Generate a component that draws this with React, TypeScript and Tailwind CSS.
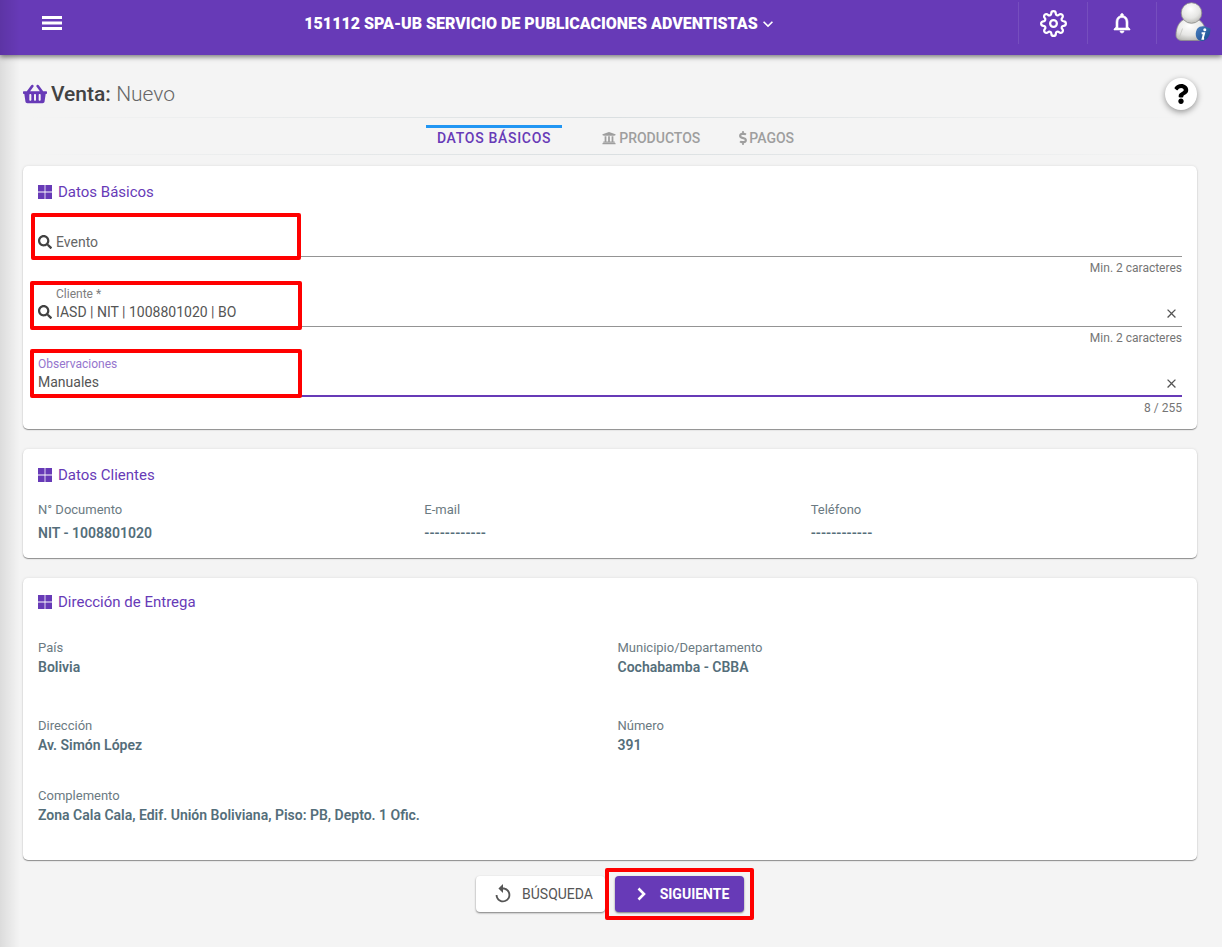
import { useState } from "react";
import type { ReactNode } from "react";
import { FaDollarSign, FaQuestion, FaSearch, FaShoppingBasket, FaUniversity } from "react-icons/fa";
import { FiSettings } from "react-icons/fi";
import { MdClose, MdExpandMore, MdNotificationsNone, MdReplay } from "react-icons/md";

function MenuIcon() {
  return (
    <svg viewBox="0 0 20 14" className="h-[14px] w-5" fill="currentColor" aria-hidden="true">
      <rect x="0" y="0" width="20" height="3" />
      <rect x="0" y="5.5" width="20" height="3" />
      <rect x="0" y="11" width="20" height="3" />
    </svg>
  );
}

function WindowsIcon() {
  return (
    <svg viewBox="0 0 14 14" className="size-[14px]" fill="currentColor" aria-hidden="true">
      <path d="M0 0h6.6v6.6H0zM7.4 0H14v6.6H7.4zM0 7.4h6.6V14H0zM7.4 7.4H14V14H7.4z" />
    </svg>
  );
}

function ChevronIcon() {
  return (
    <svg viewBox="0 0 22 22" className="size-[22px]" fill="none" stroke="currentColor" strokeWidth="2.6" aria-hidden="true">
      <path d="M8.500 5.500 14 11l-5.500 5.500" />
    </svg>
  );
}

function Avatar() {
  return (
    <svg viewBox="0 0 36 40" className="h-10 w-9" aria-hidden="true">
      <defs>
        <radialGradient id="head" cx="0.45" cy="0.3" r="0.75">
          <stop offset="0" stopColor="#ffffff" />
          <stop offset="0.6" stopColor="#e6e6e4" />
          <stop offset="1" stopColor="#b4b4b0" />
        </radialGradient>
        <linearGradient id="badge" x1="0" y1="0" x2="1" y2="1">
          <stop offset="0" stopColor="#4a7fc0" />
          <stop offset="1" stopColor="#174a8c" />
        </linearGradient>
      </defs>
      <path
        d="M9 17.500C4 19.500 1 26 1 33c0 4 3 5.500 6 5.500h18c4 0 6-2 6-5.500 0-7-3-13.500-8-15.500z"
        fill="url(#head)"
        stroke="#8f8f8c"
        strokeWidth="0.8"
      />
      <path d="M7.500 26.500 4.500 35" stroke="#c4c4c0" strokeWidth="0.8" fill="none" />
      <circle cx="16.500" cy="11" r="10.300" fill="url(#head)" stroke="#8f8f8c" strokeWidth="0.8" />
      <path
        d="M22 27c2-2.500 5-3 8-2.500l5.500 2c0 6.500-3 12-8 12.500-6 .3-8.500-6-5.500-12z"
        fill="url(#badge)"
      />
      <circle cx="29.800" cy="27.800" r="1.500" fill="#fff" />
      <path d="M26.600 31.200h2.500l-1.500 5.500h1.500" stroke="#fff" strokeWidth="2" fill="none" />
    </svg>
  );
}

function Highlight({ className }: { className: string }) {
  return (
    <span
      aria-hidden="true"
      className={`pointer-events-none absolute z-10 rounded-[2px] border-4 border-[#ff0000] ${className}`}
    />
  );
}

function Card({ title, className = "", children }: { title: string; className?: string; children: ReactNode }) {
  return (
    <section
      className={`rounded-[5px] bg-white pl-[15px] shadow-[0_1px_1px_rgba(0,0,0,0.4),0_0_3px_rgba(0,0,0,0.1)] ${className}`}
    >
      <h2 className="flex h-6 items-center gap-[6px] text-[15px] text-[#673ab7]">
        <WindowsIcon />
        {title}
      </h2>
      {children}
    </section>
  );
}

type FieldProps = {
  id: string;
  label: string;
  value: string;
  onChange: (v: string) => void;
  hint: string;
  search?: boolean;
  active?: boolean;
  highlight: string;
};

function Field({ id, label, value, onChange, hint, search, active, highlight }: FieldProps) {
  const resting = value === "" && !active;
  return (
    <div className="relative">
      <div
        className={`relative flex h-[50px] flex-col justify-end ${
          active ? "border-b-2 border-[#673ab7] pb-[3px]" : "border-b border-[#949494] pb-1"
        }`}
      >
        <label
          htmlFor={id}
          className={
            resting
              ? "absolute bottom-1 left-0 pl-[18px] text-sm leading-5 text-[#666]"
              : `h-4 text-xs leading-4 ${search ? "pl-[18px]" : ""} ${active ? "text-[#9575cd]" : "text-[#7d7d7d]"}`
          }
        >
          {label}
        </label>
        <div className="flex h-5 items-center gap-1 text-[#424242]">
          {search && <FaSearch className="size-[14px] shrink-0" />}
          <input
            id={id}
            value={value}
            onChange={(e) => onChange(e.target.value)}
            className="h-5 min-w-0 flex-1 bg-transparent text-sm text-[#555] outline-none"
          />
          {value !== "" && (
            <button
              type="button"
              aria-label={`Limpiar ${label}`}
              onClick={() => onChange("")}
              className="mr-[3px] pt-0.5 text-[#555]"
            >
              <MdClose className="size-[15px]" />
            </button>
          )}
        </div>
      </div>
      <p className="h-5 text-right text-xs leading-[22px] text-[#757575]">{hint}</p>
      <Highlight className={highlight} />
    </div>
  );
}

function Detail({ label, value, wide }: { label: string; value: string; wide?: boolean }) {
  return (
    <div className="text-[#546e7a]">
      <dt className="text-[13px] leading-5 text-[#6b7a82]">{label}</dt>
      <dd className={`text-sm leading-[18px] font-semibold ${wide ? "mt-1" : ""}`}>{value}</dd>
    </div>
  );
}

export default function App() {
  const [evento, setEvento] = useState("");
  const [cliente, setCliente] = useState("IASD | NIT | 1008801020 | BO");
  const [obs, setObs] = useState("Manuales");

  return (
    <div className="relative min-h-screen bg-[#f4f4f4] font-[Roboto,sans-serif] text-[#424242]">
      <header className="relative flex h-[55px] items-start bg-[#673ab7] pt-0.5 text-white shadow-[0_2px_5px_rgba(0,0,0,0.5)]">
        <button type="button" aria-label="Menú" className="flex h-[42px] w-16 items-center justify-end pr-0.5">
          <MenuIcon />
        </button>
        <div className="flex h-11 flex-1 items-center justify-center">
          <button type="button" className="flex items-center text-base font-black">
            151112 SPA-UB SERVICIO DE PUBLICACIONES ADVENTISTAS
            <MdExpandMore className="size-5" />
          </button>
        </div>
        <nav className="flex h-[42px]">
          <button
            type="button"
            aria-label="Configuración"
            className="flex w-[69px] items-center justify-center border-l border-white/10"
          >
            <FiSettings className="size-[27px]" />
          </button>
          <button
            type="button"
            aria-label="Notificaciones"
            className="flex w-[69px] items-center justify-center border-l border-white/10"
          >
            <MdNotificationsNone className="size-6 [&_path:first-child]:stroke-none [&_path:last-child]:stroke-current [&_path:last-child]:stroke-[0.6px]" />
          </button>
          <button
            type="button"
            aria-label="Usuario"
            className="flex w-[66px] items-start justify-center border-l border-white/10 pl-[6px]"
          >
            <Avatar />
          </button>
        </nav>
      </header>

      <main className="pr-[25px] pl-[23px]">
        <div className="flex h-[62px] items-center justify-between pt-4">
          <h1 className="flex items-center gap-1 text-[21px] leading-7 font-medium">
            <FaShoppingBasket className="size-6 text-[#673ab7]" />
            <span>
              Venta: <span className="font-light text-[#666]">Nuevo</span>
            </span>
          </h1>
          <button
            type="button"
            aria-label="Ayuda"
            className="flex size-8 items-center justify-center rounded-full bg-white text-black shadow-[0_2px_6px_rgba(0,0,0,0.4)]"
          >
            <FaQuestion className="size-5" />
          </button>
        </div>

        <div className="h-px bg-linear-to-r from-transparent via-[#dadfe1] to-transparent" />
        <div role="tablist" className="flex h-9 items-center justify-center text-sm font-medium text-[#9e9e9e]">
          <button
            type="button"
            role="tab"
            aria-selected="true"
            className="mt-1 h-[26px] border-t-[3px] border-[#2196f3] px-[11px] pb-1 font-medium tracking-wider text-[#673ab7]"
          >
            DATOS BÁSICOS
          </button>
          <button type="button" role="tab" aria-selected="false" className="ml-10 flex items-center gap-[3px] pt-1">
            <FaUniversity className="size-[14px]" />
            PRODUCTOS
          </button>
          <button type="button" role="tab" aria-selected="false" className="ml-[38px] flex items-center gap-px pt-1">
            <FaDollarSign className="h-[14px] w-[10px]" />
            PAGOS
          </button>
        </div>
        <div className="h-px bg-linear-to-r from-transparent via-[#dadfe1] to-transparent" />

        <form className="mt-[11px] flex flex-col" onSubmit={(e) => e.preventDefault()}>
          <Card title="Datos Básicos" className="pt-[14px] pr-[15px] pb-3">
            <div className="pt-[3px]">
              <Field
                id="evento"
                label="Evento"
                value={evento}
                onChange={setEvento}
                hint="Min. 2 caracteres"
                search
                highlight="top-[6px] -left-[7px] h-[47px] w-[270px]"
              />
              <Field
                id="cliente"
                label="Cliente *"
                value={cliente}
                onChange={setCliente}
                hint="Min. 2 caracteres"
                search
                highlight="top-1 -left-2 h-[49px] w-[272px]"
              />
              <Field
                id="observaciones"
                label="Observaciones"
                value={obs}
                onChange={setObs}
                hint={`${obs.length} / 255`}
                active
                highlight="top-[2px] -left-2 h-[49px] w-[272px]"
              />
            </div>
          </Card>

          <Card title="Datos Clientes" className="mt-5 pt-[14px] pb-4">
            <dl className="mt-[13px] grid grid-cols-3">
              <Detail label="N° Documento" value="NIT - 1008801020" wide />
              <Detail label="E-mail" value="------------" wide />
              <Detail label="Teléfono" value="------------" wide />
            </dl>
          </Card>

          <Card title="Dirección de Entrega" className="mt-5 pt-3 pb-9">
            <dl className="mt-6 grid grid-cols-2">
              <div className="mb-10">
                <Detail label="País" value="Bolivia" />
              </div>
              <Detail label="Municipio/Departamento" value="Cochabamba - CBBA" />
              <div className="mb-8">
                <Detail label="Dirección" value="Av. Simón López" />
              </div>
              <Detail label="Número" value="391" />
              <div className="col-span-2">
                <Detail label="Complemento" value="Zona Cala Cala, Edif. Unión Boliviana, Piso: PB, Depto. 1 Ofic." />
              </div>
            </dl>
          </Card>

          <div className="mt-4 flex justify-center gap-[10px] pb-8 text-sm font-medium">
            <button
              type="button"
              className="flex h-9 w-[129px] items-center justify-center gap-2 rounded bg-white pl-1 font-normal text-[#555] shadow-[0_1px_2px_rgba(0,0,0,0.5)]"
            >
              <MdReplay className="size-[22px]" />
              BÚSQUEDA
            </button>
            <div className="relative">
              <button
                type="submit"
                className="flex h-9 w-[129px] items-center justify-center gap-2 rounded bg-[#673ab7] font-bold text-white shadow-[0_1px_2px_rgba(0,0,0,0.5)]"
              >
                <ChevronIcon />
                SIGUIENTE
              </button>
              <Highlight className="-inset-x-[10px] -inset-y-2" />
            </div>
          </div>
        </form>
      </main>
      <div
        aria-hidden="true"
        className="pointer-events-none absolute inset-y-0 left-0 w-5 bg-linear-to-r from-black/10 to-transparent"
      />
    </div>
  );
}
